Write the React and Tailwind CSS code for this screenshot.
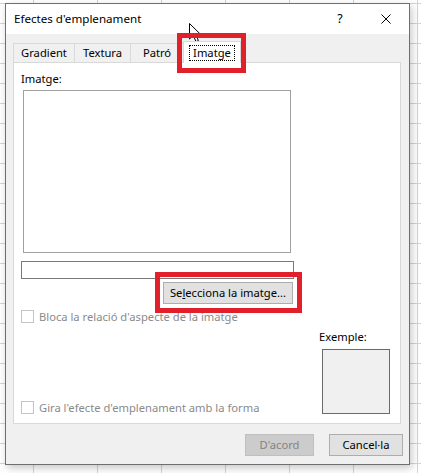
import React from 'react';

// Windows-style "Efectes d'emplenament" dialog over a spreadsheet grid
const font = "font-['Noto_Sans',sans-serif]";

function Tab({ label, width }) {
    return (
        <div
            className="h-[19px] flex items-center justify-center border-t border-l border-[#d9d9d9] bg-[#f0f0f0] text-[11.2px] text-black"
            style={{ width }}
        >
            {label}
        </div>
    );
}

function Checkbox({ label }) {
    return (
        <div className="flex items-center h-[13px]">
            <div className="w-[13px] h-[13px] border border-[#c4c4c4] bg-white" />
            <span className="ml-[5px] text-[11.2px] text-[#8a8a8a] leading-none">{label}</span>
        </div>
    );
}

function CursorArrow() {
    return (
        <svg width="13" height="20" viewBox="0 0 13 20" className="absolute left-[189px] top-[23px] pointer-events-none">
            <path d="M0.5 0.5 L0.5 16 L4.3 12.4 L7 18.6 L9.4 17.6 L6.8 11.6 L11.8 11.6 Z" fill="#fff" stroke="#000" strokeWidth="1" strokeLinejoin="round" />
        </svg>
    );
}

export default function App() {
    return (
        <div
            className={`relative w-[421px] h-[473px] overflow-hidden bg-white pt-[3px] pl-[5px] ${font} [background-image:linear-gradient(to_right,#d4d4d4_1px,transparent_1px),linear-gradient(to_bottom,#d4d4d4_1px,transparent_1px)] [background-size:64px_20px] [background-position:33px_3px]`}
        >
            <div className="w-[405px] h-[462px] border border-[#6f6f6f] bg-[#f0f0f0] flex flex-col shadow-[2px_3px_8px_rgba(0,0,0,0.22)]">
                {/* title bar */}
                <div className="h-[30px] bg-white flex items-center">
                    <span className="ml-[8px] text-[11.6px] text-black">Efectes d'emplenament</span>
                    <div className="ml-auto w-[46px] h-full flex items-center justify-center text-[12.5px] text-black">?</div>
                    <div className="w-[46px] h-full flex items-center justify-center">
                        <svg width="10" height="10" viewBox="0 0 10 10">
                            <path d="M0.5 0.5 L9.5 9.5 M9.5 0.5 L0.5 9.5" stroke="#000" strokeWidth="1" />
                        </svg>
                    </div>
                </div>

                <div className="flex-1 flex flex-col pt-[7px]">
                    {/* tabs */}
                    <div className="flex items-end ml-[7px] h-[21px]">
                        <Tab label="Gradient" width={61} />
                        <Tab label="Textura" width={56} />
                        <Tab label="Patró" width={53} />
                        <div className="relative z-10 -mb-px w-[58px] h-[22px] bg-white border-t border-l border-r border-[#d9d9d9] flex items-center justify-center">
                            <span className="px-[3px] leading-[14px] text-[11.2px] text-black border border-dotted border-black">Imatge</span>
                            <div className="absolute -left-[7px] -right-[6px] -top-[9px] -bottom-[10px] border-[5px] border-[#e2202b] pointer-events-none" />
                        </div>
                    </div>

                    {/* tab panel */}
                    <div className="ml-[7px] w-[388px] h-[362px] bg-white border border-[#d9d9d9] flex flex-col pt-[8px] pl-[7px] pr-[10px]">
                        <div className="text-[11.2px] text-black leading-[16px]">Imatge:</div>
                        <div className="mt-[3px] ml-[2px] w-[268px] h-[163px] border border-[#a0a0a0] bg-white" />
                        <div className="mt-[8px] w-[273px] h-[18px] border border-[#7a7a7a] bg-white" />
                        <div className="relative mt-[3px] ml-[142px] w-[130px] h-[22px] bg-[#e1e1e1] border border-[#adadad] flex items-center justify-center text-[11.2px] text-black">
                            <span>
                                Se<span className="underline">l</span>ecciona la imatge...
                            </span>
                            <div className="absolute -left-[9px] -right-[10px] -top-[11px] -bottom-[10px] border-[5px] border-[#e2202b] pointer-events-none" />
                        </div>
                        <div className="mt-[6px]">
                            <Checkbox label="Bloca la relació d'aspecte de la imatge" />
                        </div>
                        <div className="mt-[6px] flex items-end">
                            <Checkbox label="Gira l'efecte d'emplenament amb la forma" />
                            <div className="ml-auto flex flex-col">
                                <div className="text-[11.2px] text-black leading-[16px]">Exemple:</div>
                                <div className="mt-[4px] ml-[3px] w-[68px] h-[65px] border border-[#6a6a6a] bg-[#f0f0f0]" />
                            </div>
                        </div>
                    </div>

                    {/* dialog buttons */}
                    <div className="mt-[10px] flex justify-end gap-[15px] pr-[6px]">
                        <div className="w-[69px] h-[22px] bg-[#cccccc] border border-[#bfbfbf] flex items-center justify-center text-[11.2px] text-[#838383]">D'acord</div>
                        <div className="w-[74px] h-[22px] bg-[#e1e1e1] border border-[#adadad] flex items-center justify-center text-[11.2px] text-black">Cancel·la</div>
                    </div>
                </div>
            </div>
            <CursorArrow />
        </div>
    );
}
